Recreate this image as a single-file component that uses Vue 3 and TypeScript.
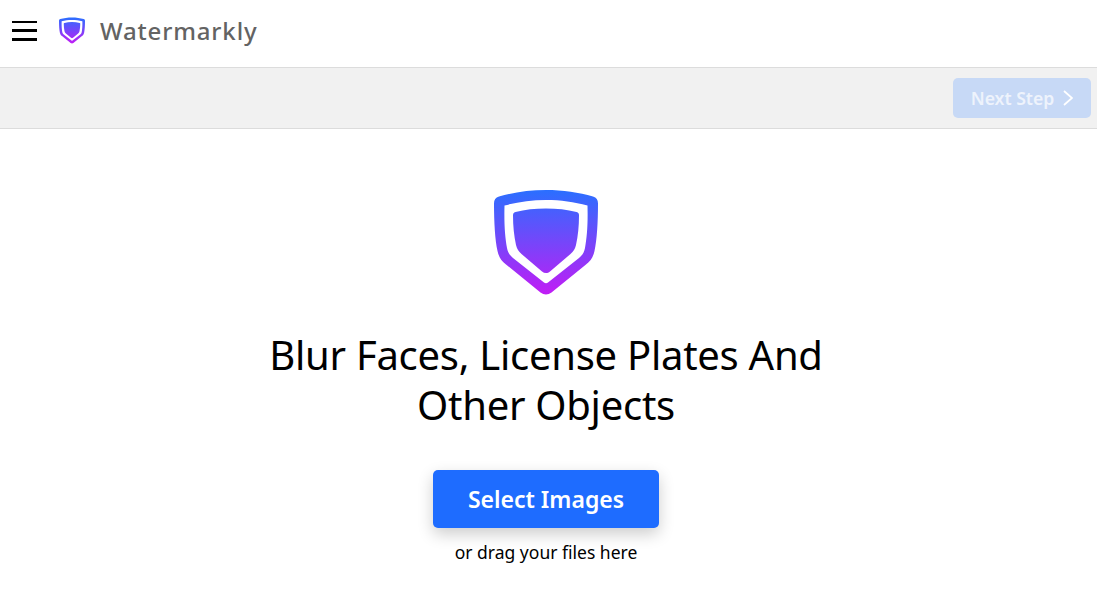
<script setup lang="ts">
const outer = 'M52 0C69 0 85 2.500 99 6.500C102.500 7.500 104 10 104 13.500C104 32 103 50 100.500 61C99 67.500 96.500 71 92 74.500L57.500 102.500C54 105 50 105 46.500 102.500L12 74.500C7.500 71 5 67.500 3.500 61C1 50 0 32 0 13.500C0 10 1.500 7.500 5 6.500C19 2.500 35 0 52 0Z'
const ring = 'M52 10C67 10 80 12 93.500 15.500C94 34 93 47 91 58C90 63 88 65.500 85 68L54 92.500C53 93.500 51 93.500 50 92.500L19 68C16 65.500 14 63 13 58C11 47 10 34 10.500 15.500C24 12 37 10 52 10Z'
const inner = 'M52 18.500C63 18.500 73 19.500 82.500 22C84.500 22.500 85 23.500 85 25.500C85 36 84 46 82 55C81 59 79.500 61.500 76.500 64L56 81.500C53.500 83.500 50.500 83.500 48 81.500L27.500 64C24.500 61.500 23 59 22 55C20 46 19 36 19 25.500C19 23.500 19.500 22.500 21.500 22C31 19.500 41 18.500 52 18.500Z'
</script>

<template>
  <div class="page">
    <header class="topbar">
      <button class="burger" aria-label="Menu">
        <span></span>
        <span></span>
        <span></span>
      </button>
      <svg class="logo-small" viewBox="0 0 104 105">
        <defs>
          <linearGradient id="shieldSmall" gradientUnits="userSpaceOnUse" x1="0" y1="0" x2="0" y2="105">
            <stop offset="0" stop-color="#2a6fff" />
            <stop offset="1" stop-color="#c21cf5" />
          </linearGradient>
        </defs>
        <path :d="outer" fill="url(#shieldSmall)" />
        <path :d="ring" fill="#fff" />
        <path :d="inner" fill="url(#shieldSmall)" />
      </svg>
      <span class="brand">Watermarkly</span>
    </header>

    <div class="toolbar">
      <button class="next">
        Next Step
        <svg class="chevron" viewBox="0 0 10 16">
          <path d="M1 1L9 8L1 15" fill="none" stroke="#fff" stroke-width="1.800" />
        </svg>
      </button>
    </div>

    <main class="content">
      <svg class="logo-big" viewBox="0 0 104 105">
        <defs>
          <linearGradient id="shieldBig" gradientUnits="userSpaceOnUse" x1="0" y1="0" x2="0" y2="105">
            <stop offset="0" stop-color="#2a6fff" />
            <stop offset="1" stop-color="#c21cf5" />
          </linearGradient>
        </defs>
        <path :d="outer" fill="url(#shieldBig)" />
        <path :d="ring" fill="#fff" />
        <path :d="inner" fill="url(#shieldBig)" />
      </svg>
      <h1>Blur Faces, License Plates And<br />Other Objects</h1>
      <button class="select">Select Images</button>
      <p class="hint">or drag your files here</p>
    </main>
  </div>
</template>

<style scoped>
.page {
  font-family: "Noto Sans", "Open Sans", sans-serif;
  color: #000;
  background: #fff;
  height: 590px;
  overflow: hidden;
}
button {
  font-family: inherit;
  border: none;
  cursor: pointer;
}
.topbar {
  display: flex;
  align-items: center;
  height: 67px;
  padding-left: 12px;
  box-sizing: border-box;
}
.burger {
  display: flex;
  flex-direction: column;
  justify-content: space-between;
  width: 25px;
  height: 20px;
  padding: 0;
  background: none;
  margin-top: -6px;
}
.burger span {
  display: block;
  height: 2.500px;
  background: #000;
}
.logo-small {
  width: 26px;
  height: 27px;
  margin-left: 22px;
  margin-top: -7px;
}
.brand {
  margin-left: 15px;
  margin-top: -6px;
  font-size: 24px;
  font-weight: 500;
  letter-spacing: 0.85px;
  color: #636363;
}
.toolbar {
  display: flex;
  justify-content: flex-end;
  align-items: center;
  height: 62px;
  box-sizing: border-box;
  padding-right: 6px;
  background: #f1f1f1;
  border-top: 1px solid #dcdcdc;
  border-bottom: 1px solid #dcdcdc;
}
.next {
  display: flex;
  align-items: center;
  justify-content: center;
  gap: 9px;
  width: 138px;
  height: 40px;
  border-radius: 5px;
  background: #c7d9f6;
  color: #eef3fc;
  font-size: 17.600px;
  font-weight: 600;
}
.chevron {
  width: 10px;
  height: 16px;
}
.content {
  display: flex;
  flex-direction: column;
  align-items: center;
  padding-top: 61px;
  padding-right: 5px;
}
.logo-big {
  width: 104px;
  height: 105px;
}
h1 {
  margin: 35px 0 0;
  font-size: 40px;
  font-weight: 400;
  letter-spacing: -0.27px;
  line-height: 50px;
  text-align: center;
}
.select {
  margin-top: 40px;
  width: 226px;
  height: 58px;
  border-radius: 5px;
  background: #1e6cff;
  color: #fff;
  font-size: 23px;
  font-weight: 600;
  box-shadow: 0 6px 16px rgba(0, 0, 0, 0.2);
}
.hint {
  margin: 11px 0 0;
  font-size: 17.500px;
  line-height: 26px;
}
</style>
